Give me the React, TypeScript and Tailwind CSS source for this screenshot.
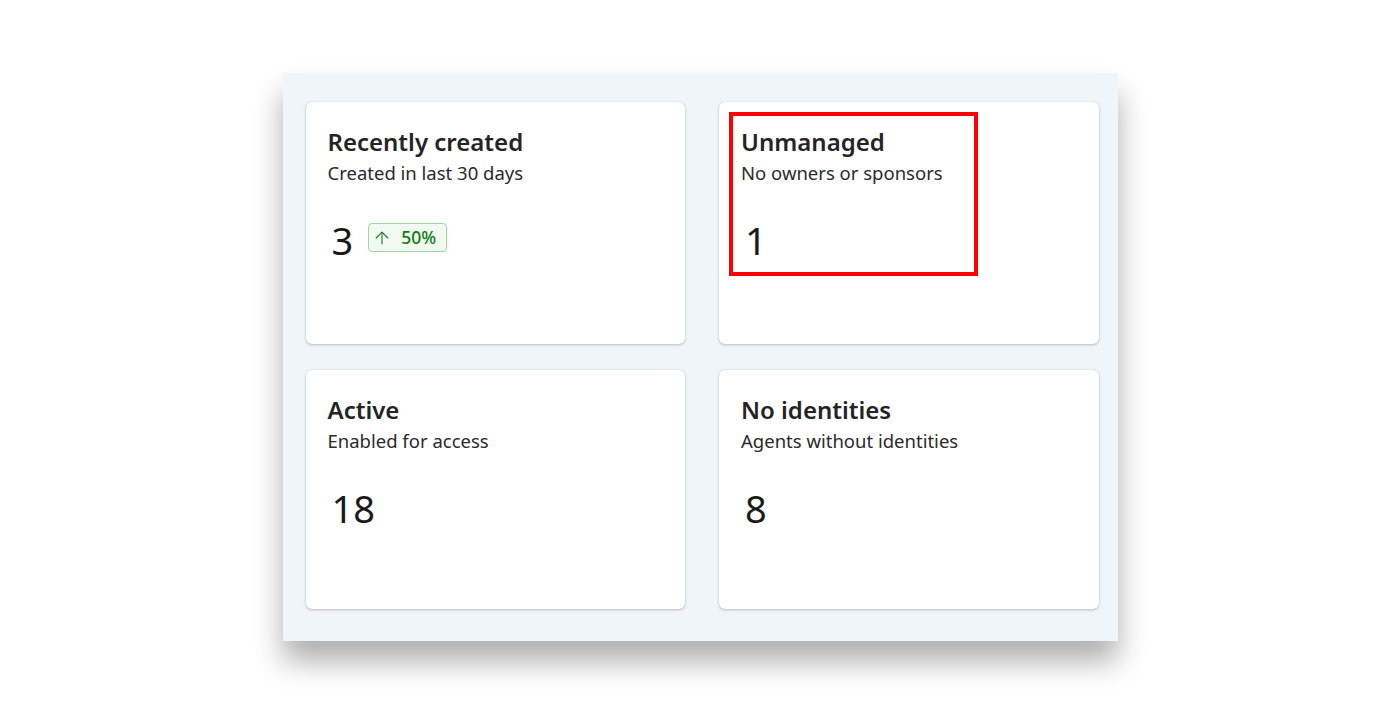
import { ArrowUp } from 'lucide-react'

type Stat = {
  title: string
  subtitle: string
  value: string
  trend?: string
  highlight?: boolean
}

const stats: Stat[] = [
  { title: 'Recently created', subtitle: 'Created in last 30 days', value: '3', trend: '50%' },
  { title: 'Unmanaged', subtitle: 'No owners or sponsors', value: '1', highlight: true },
  { title: 'Active', subtitle: 'Enabled for access', value: '18' },
  { title: 'No identities', subtitle: 'Agents without identities', value: '8' },
]

function StatCard({ stat }: { stat: Stat }) {
  return (
    <div className="relative h-full rounded-[6px] bg-white px-[22px] pt-[24px] shadow-[0_1px_3px_rgba(0,0,0,0.22),0_0_1px_rgba(0,0,0,0.18)]">
      <div className="text-[24px] leading-[32px] font-semibold text-[#242424]">{stat.title}</div>
      <div className="mt-[3px] text-[18.5px] leading-[24px] text-[#2b2b2b]">{stat.subtitle}</div>
      <div className="mt-[33px] flex items-center gap-[15px] pl-[4px]">
        <span className="text-[38px] leading-[44px] text-[#1a1a1a]">{stat.value}</span>
        {stat.trend && (
          <span className="mb-[5px] flex h-[29px] items-center gap-[9px] rounded-[4px] border border-[#9fd89f] bg-[#f1faf1] pl-[3px] pr-[10px] text-[17.5px] font-medium text-[#107c10]">
            <ArrowUp className="h-[20px] w-[20px]" strokeWidth={1.3} />
            {stat.trend}
          </span>
        )}
      </div>
      {stat.highlight && (
        <div className="pointer-events-none absolute left-[10px] top-[10px] h-[164px] w-[249px] border-[4px] border-[#ff0000]" />
      )}
    </div>
  )
}

export default function App() {
  return (
    <div className="min-h-[716px] bg-white pt-[73px]" style={{ fontFamily: '"Noto Sans", "Open Sans", sans-serif' }}>
      <div className="mx-auto w-[835px] bg-[#eff5f9] pb-[32px] pl-[23px] pr-[19px] pt-[29px] shadow-[0_20px_28px_rgba(0,0,0,0.32)]">
        <div className="grid grid-cols-2 grid-rows-[242px_239px] gap-x-[34px] gap-y-[26px]">
          {stats.map((s) => (
            <StatCard key={s.title} stat={s} />
          ))}
        </div>
      </div>
    </div>
  )
}
